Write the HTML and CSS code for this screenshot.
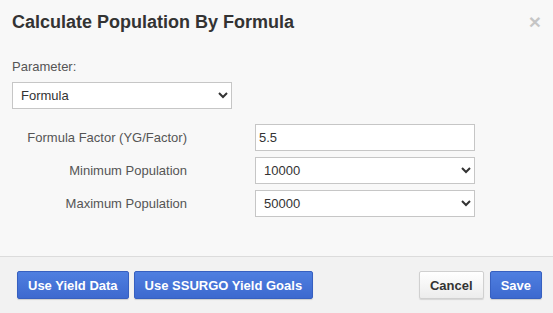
FILE: index.html
```html
<!DOCTYPE html>
<html>
  <head>
    <meta charset="UTF-8" />
    <title>Calculate Population By Formula</title>
    <link rel="stylesheet" href="styles.css">
  </head>
  <body>
    <div class="modal">
      <div class="modal-header">
        <h2 class="modal-title">Calculate Population By Formula</h2>
        <button class="close" type="button">&times;</button>
      </div>
      <div class="modal-body">
        <label class="param-label" for="parameter">Parameter:</label>
        <select class="field param-select" id="parameter">
          <option>Formula</option>
          <option>Yield Data</option>
        </select>
        <div class="form-grid">
          <label class="row-label" for="factor">Formula Factor (YG/Factor)</label>
          <input class="field text-field" id="factor" type="text" value="5.5" />
          <label class="row-label" for="minPop">Minimum Population</label>
          <select class="field" id="minPop">
            <option>10000</option>
            <option>20000</option>
          </select>
          <label class="row-label" for="maxPop">Maximum Population</label>
          <select class="field" id="maxPop">
            <option>50000</option>
            <option>60000</option>
          </select>
        </div>
      </div>
      <div class="modal-footer">
        <div class="btn-group">
          <button class="btn btn-primary" type="button">Use Yield Data</button>
          <button class="btn btn-primary" type="button">Use SSURGO Yield Goals</button>
        </div>
        <div class="btn-group">
          <button class="btn btn-default" type="button">Cancel</button>
          <button class="btn btn-primary" type="button">Save</button>
        </div>
      </div>
    </div>
  </body>
</html>
```

FILE: styles.css
```css
body {
  margin: 0;
  background-color: #f8f8f8;
  font-family: "Liberation Sans", Arial, sans-serif;
  color: #333;
}
.modal {
  width: 553px;
  height: 313px;
  display: flex;
  flex-direction: column;
}
.modal-header {
  display: flex;
  justify-content: space-between;
  align-items: flex-start;
  padding: 11px 12px 0 12px;
}
.modal-title {
  margin: 0;
  font-size: 18px;
  line-height: 22px;
  font-weight: bold;
  color: #333;
}
.close {
  border: none;
  background: none;
  padding: 0;
  margin-top: 0;
  font-family: "Liberation Sans", Arial, sans-serif;
  font-size: 21px;
  font-weight: bold;
  line-height: 21px;
  color: #000;
  opacity: 0.2;
  cursor: pointer;
}
.modal-body {
  padding: 26px 12px 39px 12px;
}
.param-label {
  display: block;
  font-size: 13px;
  line-height: 15px;
  color: #555;
}
.field {
  box-sizing: border-box;
  width: 220px;
  height: 27px;
  border: 1px solid #c6c6c6;
  border-radius: 0;
  background-color: #fff;
  font-family: "Liberation Sans", Arial, sans-serif;
  font-size: 13px;
  color: #333;
  padding: 0 4px;
  margin: 0;
  outline: none;
}
select.field {
  padding-left: 4px;
}
.param-select {
  display: block;
  margin-top: 8px;
}
.text-field {
  padding-left: 3px;
}
.form-grid {
  display: grid;
  grid-template-columns: 175px 220px;
  column-gap: 68px;
  row-gap: 6px;
  align-items: center;
  margin-top: 15px;
}
.row-label {
  text-align: right;
  font-size: 13px;
  color: #555;
}
.modal-footer {
  display: flex;
  justify-content: space-between;
  align-items: center;
  border-top: 1px solid #dcdcdc;
  background-color: #f2f2f2;
  padding: 14px 11px 14px 17px;
  flex: 1;
}
.btn-group {
  display: flex;
  gap: 5px;
}
.btn-group + .btn-group {
  gap: 6px;
}
.btn {
  box-sizing: border-box;
  height: 28px;
  padding: 0 10px;
  font-family: "Liberation Sans", Arial, sans-serif;
  font-size: 13px;
  font-weight: bold;
  border-radius: 2px;
  cursor: pointer;
}
.btn-primary {
  color: #fff;
  background: linear-gradient(#4f7fe0, #3d69cf);
  border: 1px solid #3760c0;
  box-shadow: 0 1px 1px rgba(0, 0, 0, 0.15);
}
.btn-default {
  color: #333;
  background: linear-gradient(#ffffff, #ececec);
  border: 1px solid #d0d0d0;
  box-shadow: 0 1px 1px rgba(0, 0, 0, 0.12);
}
```
